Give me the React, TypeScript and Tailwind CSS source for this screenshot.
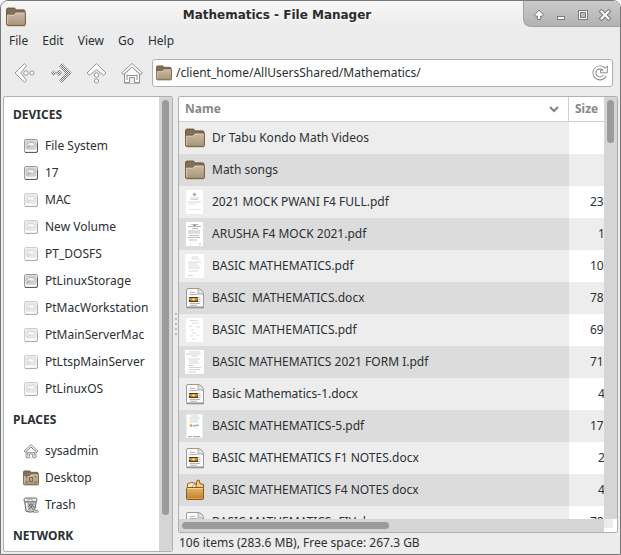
import React from 'react';

const sans = "font-['Noto_Sans','Open_Sans',sans-serif]";

function FolderIcon({ className }: { className: string }) {
  return (
    <svg className={className} viewBox="0 0 20 20" aria-hidden="true">
      <defs>
        <linearGradient id="folderFront" x1="0" y1="0" x2="0" y2="1">
          <stop offset="0" stopColor="#cbbba6" />
          <stop offset="1" stopColor="#a89579" />
        </linearGradient>
      </defs>
      <rect x="1" y="17.5" width="18.5" height="2" rx="1" fill="#000" opacity="0.2" />
      <path d="M.6 17V2.700Q.6 1.100 2 1.100h6.200q1 0 1.200 1.200l.2.600h8q1.400 0 1.400 1.400V17z" fill="#83705a" stroke="#66523a" />
      <path d="M.6 17.2V8q0-.8.8-.8h6.300l1.800-1.800q.3-.3.8-.3h8q1.100 0 1.100 1.200v11q0 1.100-1.200 1.100H1.700q-1.100 0-1.100-1.200z" fill="url(#folderFront)" stroke="#775f3e" />
      <path d="M1.600 17V8.200h6.500L10 6.100h8.400" fill="none" stroke="#dfd3c0" strokeWidth="0.8" />
    </svg>
  );
}

function HomeIcon({ className, stroke }: { className: string; stroke: string }) {
  return (
    <svg className={className} viewBox="0 0 24 24" fill="#fafafa" stroke={stroke} strokeLinejoin="round" aria-hidden="true">
      <path d="M4.500 12.500v9h5v-5h5v5h5v-9L12 6z" />
      <path d="M7 13.500v5.500M17 13.500v5.500M7 14.500h10" fill="none" />
      <path d="M12 2.500 1.500 12l1.700 1.700L12 6l8.800 7.700 1.700-1.700z" />
      <path d="M4 22.500h16" stroke="#bbb" />
    </svg>
  );
}

function BackIcon() {
  return (
    <svg className="size-6" viewBox="0 0 24 24" fill="#f8f8f8" stroke="#999" aria-hidden="true">
      <path d="M12.500 2.500 3 12l9.500 9.500 2-2.300L8.800 12l5.700-7.200z" strokeLinejoin="round" />
      <circle cx="14" cy="12" r="2.300" />
      <circle cx="20" cy="12" r="2.100" />
    </svg>
  );
}

function ForwardIcon() {
  return (
    <svg className="size-6" viewBox="0 0 24 24" aria-hidden="true">
      <defs>
        <pattern id="stipple" width="2" height="2" patternUnits="userSpaceOnUse">
          <rect width="2" height="2" fill="#f0f0f0" />
          <rect width="1" height="1" fill="#777" />
          <rect x="1" y="1" width="1" height="1" fill="#777" />
        </pattern>
      </defs>
      <path d="M14 2 24 12 14 22l-3-3 6-7-6-7z" fill="url(#stipple)" />
      <path d="M5.500 9.500 8 12l-2.500 2.500L3 12zM11 9l3 3-3 3-3-3z" fill="url(#stipple)" stroke="#999" strokeWidth=".5" />
    </svg>
  );
}

function UpIcon() {
  return (
    <svg className="size-6" viewBox="0 0 24 24" fill="#f8f8f8" stroke="#999" aria-hidden="true">
      <path d="M12.500 2.500 3 12l2.300 2.300 7.200-5.500 7.200 5.500L22 12z" strokeLinejoin="round" />
      <circle cx="12.500" cy="14" r="2.300" />
      <circle cx="12.500" cy="20" r="2.100" />
    </svg>
  );
}

function ReloadIcon() {
  return (
    <svg className="size-4" viewBox="0 0 16 16" fill="none" aria-hidden="true">
      <path d="M12.800 10.500A5.500 5.500 0 1 1 12 4.200" stroke="#8a8a8a" strokeWidth="4" />
      <path d="M15.300.8v7H8.600V5.300h2.600z" fill="#fff" stroke="#8a8a8a" />
      <path d="M12.800 10.200A5.500 5.500 0 1 1 12 4.200l1.200 1.200" stroke="#fff" strokeWidth="2" />
    </svg>
  );
}

function DriveIcon({ mounted }: { mounted: boolean }) {
  return (
    <svg className={mounted ? 'size-4' : 'size-4 opacity-50'} viewBox="0 0 16 16" aria-hidden="true">
      <rect x="1.500" y="1.500" width="13" height="13" rx="1.500" fill="#ececec" stroke="#9a9a9a" />
      <path d="M2 14.500h11q1.500 0 1.500-1.500V5" fill="none" stroke="#5c5c5c" />
      <rect x="3" y="3" width="10" height="8" rx="2" fill="#dadada" stroke="#bdbdbd" strokeWidth=".8" />
      <ellipse cx="8" cy="6.600" rx="3.600" ry="2.300" fill="#f0f0f0" stroke="#aaa" strokeWidth=".8" />
      <path d="M4 10l3.500-2.500" stroke="#999" />
      <path d="M2.500 12.500h11" stroke="#fff" />
    </svg>
  );
}

function DesktopIcon() {
  return (
    <span className="relative block size-4">
      <FolderIcon className="size-4" />
      <svg className="absolute inset-0 size-4" viewBox="0 0 16 16" fill="none" stroke="#7a6343" strokeWidth=".9" aria-hidden="true">
        <rect x="6.500" y="7.500" width="3" height="4" />
        <path d="M3 8V6.500h1.500M11.500 6.500H13V8M3 11v1.500h1.500M11.500 12.500H13V11" />
      </svg>
    </span>
  );
}

function TrashIcon() {
  return (
    <svg className="size-4" viewBox="0 0 16 16" aria-hidden="true">
      <path d="M1.500 3 3 14.200q4 2 8.500 0L13.500 3z" fill="#c6cac8" stroke="#666" />
      <rect x="1" y="1" width="13" height="3.800" rx="1.600" fill="#ececec" stroke="#666" />
      <path d="M4 3.500l3-1.500 3 1.500" stroke="#888" fill="#fff" strokeWidth=".8" />
      <path d="M5.500 6.500l5 6.500M8 6.500l3.500 4.500M10.500 6.500l-5 6.500M8 6.500l-3 4" stroke="#555" strokeWidth=".8" />
      <path d="M3.300 6l1 7" stroke="#fff" />
      <path d="M10 15.200 11.500 12.500l1.500 1.500 1.500-1 .8 2.200z" fill="#f2f2f2" stroke="#777" strokeWidth=".8" />
    </svg>
  );
}

function DocIcon() {
  return (
    <svg className="h-[22px] w-5" viewBox="0 0 20 22" aria-hidden="true">
      <path d="M1.500 20.500h17.500" stroke="#8a8a8a" strokeWidth="1.500" />
      <path d="M3 1.500h9.500q5.500.5 6 6.500v10.500q0 1.500-1.500 1.500H3q-1.500 0-1.500-1.500V3Q1.500 1.500 3 1.500z" fill="#fafafa" stroke="#999" />
      <path d="M12.500 1.500q1 1 .5 5.500 4.500-.5 5.500 1-.500-6-6-6.500z" fill="#e4e4e4" stroke="#999" strokeWidth=".8" />
      <path d="M5 5.500h5M4.500 7.500h8M13.500 10.500h2M13.500 12.500h2M13.500 14.500h2M5 16.500h10M5 18.300h7" stroke="#aaa" strokeWidth=".9" />
      <rect x="4" y="10" width="9" height="5" fill="#4a3a1a" />
      <path d="M4 11h9v1.500L11 14H6l-2-1.500z" fill="#c98d28" />
      <path d="M7 12.300l1.500-1.300 1.500 1.300-1.500 1.200z" fill="#ffe59a" />
    </svg>
  );
}

function PackageIcon() {
  return (
    <svg className="h-[22px] w-5" viewBox="0 0 20 22" aria-hidden="true">
      <defs>
        <linearGradient id="boxFront" x1="0" y1="0" x2="0" y2="1">
          <stop offset="0" stopColor="#e9b868" />
          <stop offset="1" stopColor="#bd7f2a" />
        </linearGradient>
      </defs>
      <path d="M2.500 8.500V4.800l4-1.500 3.500 1v4.200z" fill="#fbe9c4" stroke="#95621e" />
      <path d="M10.500 9 12 1.500l2-.5 1 3.500 3.500 1v4z" fill="#efc984" stroke="#8a5a1a" />
      <path d="M6.500 8.500l4-4.500.5 4.500z" fill="#fff" stroke="#95621e" strokeWidth=".7" />
      <rect x="1.500" y="8.500" width="17" height="12" rx="1" fill="url(#boxFront)" stroke="#8a5a1a" />
      <path d="M2.500 9.500h15" stroke="#f7d79c" />
      <path d="M2.500 19.500h15" stroke="#d6a352" />
    </svg>
  );
}

function PageThumb({ variant }: { variant: string }) {
  const ink = variant === 'dense' ? '#aaa' : variant === 'faint' ? '#d2d2d2' : '#c8c8c8';
  return (
    <svg className="h-6 w-5" viewBox="0 0 20 24" fill="none" aria-hidden="true">
      {variant === 'wide' || variant === 'form' ? (
        <rect x="0" y="0" width="19" height="24" fill="#fff" />
      ) : (
        <rect x="1" y="0" width="17" height="24" fill="#fff" />
      )}
      {variant === 'seal' && (
        <g stroke={ink}>
          <circle cx="9.500" cy="4.500" r="1.300" fill="#888" />
          <path d="M5 8h9M6 9.500h7M3 12h13" strokeWidth=".8" />
          <path d="M3 14h8M4 19.500h12" strokeWidth=".5" />
        </g>
      )}
      {variant === 'dense' && (
        <g stroke={ink} strokeWidth=".8">
          <path d="M6 2.500h7M3 4.500h13M7 6.500h6M3 9h12M3 11h12M4 13.500h10M3 15.500h12M4 18h8" />
          <circle cx="9.500" cy="3.500" r="1" fill="#777" />
          <path d="M5 22h1M14 22h2" stroke="#c9a0c0" />
        </g>
      )}
      {variant === 'wide' && (
        <path d="M7 3h6M6 5h8M3 8h13M3 10h9M4 12h10M3 14h12M4 17h9M3 21.500h5" stroke={ink} strokeWidth=".7" />
      )}
      {variant === 'faint' && (
        <path d="M5 2.500h8M7 5h6M4 8h3M11 9h4M6 12h3M7 15h4M12 17h2M5 18h3M7 21h4" stroke={ink} strokeWidth=".8" />
      )}
      {variant === 'form' && (
        <g stroke={ink} strokeWidth=".8">
          <path d="M4 2h11M3 4h13M6 6h7M3 9h12M4 11h9M4 13h10M3 15.500h6M4 17.500h12M4 19.500h11M3 22h8" />
          <path d="M1 4h2" stroke="#e59a9a" />
        </g>
      )}
      {variant === 'color' && (
        <g>
          <path d="M6 2h7M4 4h11M5 6h8M4 8h9" stroke={ink} strokeWidth=".8" />
          <rect x="1.500" y=".5" width="16" height="23" stroke="#e0f4e8" />
          <circle cx="6" cy="11.500" r="1.500" fill="#eca450" />
          <path d="M8 12.300q3-1.500 6-.8" stroke="#8cc79a" strokeWidth="1.500" />
          <path d="M3 22.500h4M8 22.500h7" stroke="#888" strokeWidth=".7" />
        </g>
      )}
    </svg>
  );
}

const devices = [
  { name: 'File System', mounted: true },
  { name: '17', mounted: true },
  { name: 'MAC', mounted: false },
  { name: 'New Volume', mounted: false },
  { name: 'PT_DOSFS', mounted: false },
  { name: 'PtLinuxStorage', mounted: true },
  { name: 'PtMacWorkstation', mounted: false },
  { name: 'PtMainServerMac', mounted: false },
  { name: 'PtLtspMainServer', mounted: false },
  { name: 'PtLinuxOS', mounted: false },
];

const files = [
  { name: 'Dr Tabu Kondo Math Videos', kind: 'folder', size: '' },
  { name: 'Math songs', kind: 'folder', size: '' },
  { name: '2021 MOCK PWANI F4 FULL.pdf', kind: 'seal', size: '23' },
  { name: 'ARUSHA F4 MOCK 2021.pdf', kind: 'dense', size: '1' },
  { name: 'BASIC MATHEMATICS.pdf', kind: 'wide', size: '10' },
  { name: 'BASIC  MATHEMATICS.docx', kind: 'doc', size: '78' },
  { name: 'BASIC  MATHEMATICS.pdf', kind: 'faint', size: '69' },
  { name: 'BASIC MATHEMATICS 2021 FORM I.pdf', kind: 'form', size: '71' },
  { name: 'Basic Mathematics-1.docx', kind: 'doc', size: '4' },
  { name: 'BASIC MATHEMATICS-5.pdf', kind: 'color', size: '17' },
  { name: 'BASIC MATHEMATICS F1 NOTES.docx', kind: 'doc', size: '2' },
  { name: 'BASIC MATHEMATICS F4 NOTES docx', kind: 'package', size: '4' },
  { name: 'BASIC MATHEMATICS- FIV.docx', kind: 'doc', size: '78' },
];

function FileIcon({ kind }: { kind: string }) {
  if (kind === 'folder') return <FolderIcon className="size-5" />;
  if (kind === 'doc') return <DocIcon />;
  if (kind === 'package') return <PackageIcon />;
  return <PageThumb variant={kind} />;
}

function SideHeading({ children }: { children: React.ReactNode }) {
  return <h2 className="flex h-[35px] shrink-0 items-center pl-[9px] font-bold">{children}</h2>;
}

function SideItem({ icon, label }: { icon: React.ReactNode; label: string }) {
  return (
    <li>
      <button type="button" className="flex h-[27px] w-full items-center gap-1.5 pl-[19px] text-left whitespace-nowrap">
        {icon}
        {label}
      </button>
    </li>
  );
}

function TitleBar() {
  return (
    <header className="flex h-[26px] shrink-0 bg-linear-to-b from-[#f7f7f7] to-[#ececec]">
      <div className="flex w-[30px] items-end pl-[5px]">
        <FolderIcon className="size-5" />
      </div>
      <h1 className="flex flex-1 items-center justify-center pt-0.5 font-['DejaVu_Sans',sans-serif] text-[12px] font-bold text-[#2b2b2b] [text-shadow:0_1px_1px_#fff]">
        Mathematics - File Manager
      </h1>
      <div className="flex w-[97px] items-center justify-around rounded-bl-lg border-b border-l border-[#a2a2a2] bg-linear-to-b from-[#cbcbcb] to-[#b2b2b2] pt-0.5 pr-1 pl-1">
        <button type="button" aria-label="Shade">
          <svg className="size-3.5" viewBox="0 0 14 14" fill="#fff" stroke="#777"><path d="M7 2 2.500 7l1 1.200H5.500V11.500h3V8.200h2l1-1.200z" /></svg>
        </button>
        <button type="button" aria-label="Minimize">
          <svg className="size-3.5" viewBox="0 0 14 14"><rect x="3.500" y="8.500" width="7" height="3" fill="#fff" stroke="#777" /></svg>
        </button>
        <button type="button" aria-label="Maximize">
          <svg className="size-3.5" viewBox="0 0 14 14" fill="#fff" stroke="#777"><rect x="2.500" y="2.500" width="9" height="9" /><rect x="4.500" y="4.500" width="5" height="5" fill="#bbb" /></svg>
        </button>
        <button type="button" aria-label="Close">
          <svg className="size-3.5" viewBox="0 0 14 14" fill="none"><path d="M3.500 3.500l7 7M10.500 3.500l-7 7" stroke="#777" strokeWidth="4" strokeLinecap="square" /><path d="M3.500 3.500l7 7M10.500 3.500l-7 7" stroke="#fff" strokeWidth="2" strokeLinecap="square" /></svg>
        </button>
      </div>
    </header>
  );
}

export default function App() {
  return (
    <div className={`flex h-screen flex-col overflow-hidden rounded-t-lg border border-[#777] bg-[#ececec] text-[12px] leading-4 text-[#2b3033] ${sans}`}>
      <TitleBar />
      <nav className="flex h-7 shrink-0 items-center gap-3.5 pl-2" aria-label="Menu">
        {['File', 'Edit', 'View', 'Go', 'Help'].map((item) => (
          <button key={item} type="button">{item}</button>
        ))}
      </nav>
      <div className="flex shrink-0 items-center gap-3 pt-1 pr-[7px] pb-[9px] pl-[11px]">
        <button type="button" aria-label="Back"><BackIcon /></button>
        <button type="button" aria-label="Forward"><ForwardIcon /></button>
        <button type="button" aria-label="Up"><UpIcon /></button>
        <button type="button" aria-label="Home"><HomeIcon className="size-6" stroke="#929292" /></button>
        <div className="-ml-1 flex h-7 min-w-0 flex-1 items-center rounded-[3px] border border-[#b0b0b0] bg-white pr-1 pl-[3px]">
          <FolderIcon className="size-4 shrink-0" />
          <input aria-label="Location" className="min-w-0 flex-1 bg-transparent pl-1 outline-none" defaultValue="/client_home/AllUsersShared/Mathematics/" />
          <button type="button" aria-label="Reload"><ReloadIcon /></button>
        </div>
      </div>

      <div className="flex min-h-0 flex-1 pr-0.5 pb-0.5 pl-0.5">
        <aside className="flex w-[170px] shrink-0 overflow-hidden rounded-xs border border-[#b0b0b0] bg-white">
          <div className="min-w-0 flex-1 overflow-hidden">
            <SideHeading>DEVICES</SideHeading>
            <ul>
              {devices.map((d) => (
                <SideItem key={d.name} icon={<DriveIcon mounted={d.mounted} />} label={d.name} />
              ))}
            </ul>
            <SideHeading>PLACES</SideHeading>
            <ul>
              <SideItem icon={<HomeIcon className="size-4" stroke="#5f5f5f" />} label="sysadmin" />
              <SideItem icon={<DesktopIcon />} label="Desktop" />
              <SideItem icon={<TrashIcon />} label="Trash" />
            </ul>
            <SideHeading>NETWORK</SideHeading>
          </div>
          <div className="flex w-[13px] flex-col items-center bg-[#d5d5d5] pt-[3px]">
            <div className="h-[92%] w-[7px] rounded-full bg-[#9a9b9d]" />
          </div>
        </aside>

        <div className="flex w-[5px] shrink-0 flex-col items-center justify-center gap-[3px]">
          {[0, 1, 2, 3, 4].map((n) => (
            <span key={n} className="size-0.5 bg-[#bcbcbc]" />
          ))}
        </div>

        <main className="flex min-w-0 flex-1 flex-col">
          <div className="flex min-h-0 flex-1 flex-col overflow-hidden rounded-xs border border-[#b0b0b0] bg-white">
            <div className="flex min-h-0 flex-1">
              <div className="min-w-0 flex-1 overflow-hidden">
                <table className="w-full table-fixed border-separate border-spacing-0">
                  <thead>
                    <tr className="h-[25px] text-left text-[#888]">
                      <th className="border-r border-b border-[#d0d0d0] p-0">
                        <button type="button" className="flex w-full items-center justify-between pr-2 pl-1.5">
                          Name
                          <svg className="size-3" viewBox="0 0 12 12" fill="none" stroke="#808080" strokeWidth="2" aria-hidden="true"><path d="M2 4l4 4 4-4" /></svg>
                        </button>
                      </th>
                      <th className="w-[35px] border-b border-[#d0d0d0] p-0">
                        <button type="button" className="pl-1.5">Size</button>
                      </th>
                    </tr>
                  </thead>
                  <tbody>
                    {files.map((f, i) => (
                      <tr key={i} className="group h-8">
                        <td className="bg-[#ededed] p-0 group-even:bg-[#dcdcdc]">
                          <div className="flex h-8 items-center gap-[7px] pl-1.5">
                            <FileIcon kind={f.kind} />
                            <span className="whitespace-pre">{f.name}</span>
                          </div>
                        </td>
                        <td className={f.size.length > 1 ? 'p-0 pl-[21px] group-even:bg-[#ededed]' : 'p-0 pl-[29px] group-even:bg-[#ededed]'}>
                          {f.size}
                        </td>
                      </tr>
                    ))}
                  </tbody>
                </table>
              </div>
              <div className="flex w-[13px] shrink-0 flex-col items-center bg-[#d5d5d5] pt-[3px]">
                <div className="h-[43px] w-[7px] rounded-full bg-[#9a9b9d]" />
              </div>
            </div>
            <div className="flex h-[13px] shrink-0">
              <div className="flex flex-1 items-center bg-[#d5d5d5] pl-[3px]">
                <div className="h-[7px] w-[49%] rounded-full bg-[#9a9b9d]" />
              </div>
              <div className="w-[13px]">
                <div className="size-[9px] bg-[#ececec]" />
              </div>
            </div>
          </div>
          <footer className="flex h-[19px] shrink-0 items-center pl-px">
            106 items (283.6 MB), Free space: 267.3 GB
          </footer>
        </main>
      </div>
    </div>
  );
}
